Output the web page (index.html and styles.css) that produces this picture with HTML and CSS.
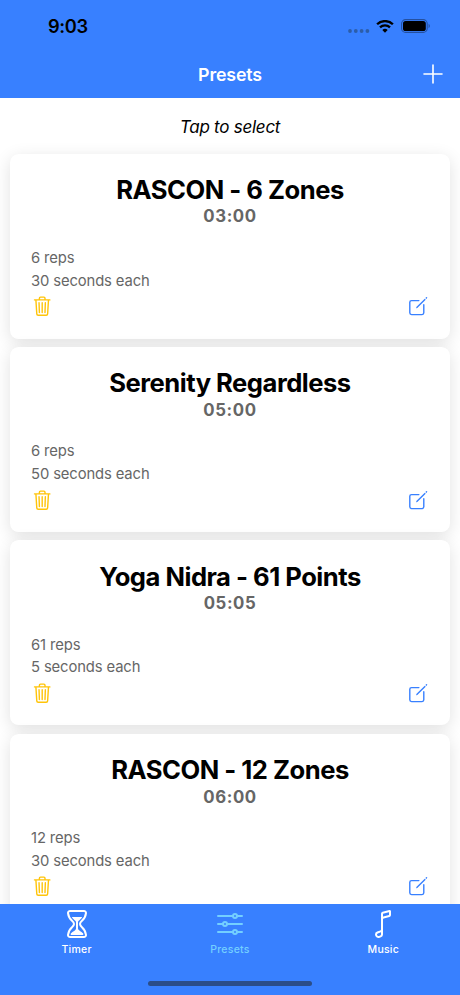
FILE: index.html
```html
<!DOCTYPE html>
<html lang="en">
<head>
<meta charset="utf-8">
<title>Presets</title>
<link rel="stylesheet" href="styles.css">
</head>
<body>
<svg class="symbols" aria-hidden="true">
  <symbol id="trash" viewBox="0 0 512 512"><path d="m112 112 20 320c.95 18.49 14.4 32 32 32h184c18 0 31-13.5 32-32l20-320M80 112h352M192 112V72a24 24 0 0 1 24-24h80a24 24 0 0 1 24 24v40M256 176v224M184 176l8 224M328 176l-8 224"/></symbol>
  <symbol id="edit" viewBox="0 0 512 512"><path d="M384 224v184a40 40 0 0 1-40 40H104a40 40 0 0 1-40-40V168a40 40 0 0 1 40-40h167.5"/><path class="solid" d="M459.94 53.25a16.06 16.06 0 0 0-23.22-.56L424.35 65a8 8 0 0 0 0 11.31l11.34 11.32a8 8 0 0 0 11.34 0l12.06-12c6.1-6.09 6.67-16.01.85-22.38zM399.34 90 218.82 270.2a9 9 0 0 0-2.31 3.93L208.16 299a3.91 3.91 0 0 0 4.86 4.86l24.85-8.35a9 9 0 0 0 3.93-2.31L422 112.66a9 9 0 0 0 0-12.66l-9.95-10a9 9 0 0 0-12.71 0z"/></symbol>
</svg>
<div class="screen">
  <header class="header">
    <div class="status">
      <span class="clock">9:03</span>
      <div class="indicators">
        <svg class="signal" viewBox="0 0 22 4"><circle cx="2" cy="2" r="1.9"/><circle cx="7.8" cy="2" r="1.9"/><circle cx="13.6" cy="2" r="1.9"/><circle cx="19.4" cy="2" r="1.9"/></svg>
        <svg class="wifi" viewBox="0 0 18 13"><path class="arc" d="M1.1 4.3a11.3 11.3 0 0 1 15.8 0M4 7.3a7.2 7.2 0 0 1 10 0"/><path d="M9 12.8 6.3 10.1a3.8 3.8 0 0 1 5.4 0z"/></svg>
        <svg class="battery" viewBox="0 0 30 14"><rect class="case" x=".6" y=".6" width="25.6" height="12.8" rx="4"/><rect x="2" y="2" width="22.8" height="10" rx="2.6"/><path class="cap" d="M27.6 4.8v4.4c1.7-.8 1.7-3.6 0-4.4z"/></svg>
      </div>
    </div>
    <div class="navbar">
      <h1>Presets</h1>
      <svg class="add" viewBox="0 0 20 20"><path d="M10 1v18M1 10h18"/></svg>
    </div>
  </header>
  <main class="content">
    <p class="hint">Tap to select</p>
    <section class="card">
      <h2>RASCON - 6 Zones</h2>
      <div class="time">03:00</div>
      <p class="details">6 reps<br>30 seconds each</p>
      <div class="actions"><svg class="trash"><use href="#trash"/></svg><svg class="edit"><use href="#edit"/></svg></div>
    </section>
    <section class="card">
      <h2>Serenity Regardless</h2>
      <div class="time">05:00</div>
      <p class="details">6 reps<br>50 seconds each</p>
      <div class="actions"><svg class="trash"><use href="#trash"/></svg><svg class="edit"><use href="#edit"/></svg></div>
    </section>
    <section class="card">
      <h2>Yoga Nidra - 61 Points</h2>
      <div class="time">05:05</div>
      <p class="details">61 reps<br>5 seconds each</p>
      <div class="actions"><svg class="trash"><use href="#trash"/></svg><svg class="edit"><use href="#edit"/></svg></div>
    </section>
    <section class="card">
      <h2>RASCON - 12 Zones</h2>
      <div class="time">06:00</div>
      <p class="details">12 reps<br>30 seconds each</p>
      <div class="actions"><svg class="trash"><use href="#trash"/></svg><svg class="edit"><use href="#edit"/></svg></div>
    </section>
  </main>
  <footer class="footer">
    <nav class="tabs">
      <div class="tab">
        <svg viewBox="0 0 512 512"><path d="M145.61 464h220.78c19.8 0 35.55-16.29 33.42-35.06C386.06 308 304 310 304 256s83.11-51 95.8-172.94c2-18.78-13.61-35.06-33.41-35.06H145.61c-19.8 0-35.37 16.28-33.41 35.06C124.89 205 208 201 208 256s-82.06 52-95.8 172.94c-2.14 18.77 13.61 35.06 33.41 35.06z"/><path class="solid" d="M343.3 432H169.13c-15.6 0-20-18-9.06-29.16C186.55 376 240 356.78 240 326V224c0-19.85-38-35-61.51-67.2-3.88-5.31-3.49-12.8 6.37-12.8h142.73c8.41 0 10.23 7.43 6.4 12.75C310.82 189 272 204.05 272 224v102c0 30.53 55.71 47 80.4 76.87 9.95 12.04 6.47 29.13-9.1 29.13z"/></svg>
        <span>Timer</span>
      </div>
      <div class="tab active">
        <svg viewBox="0 0 512 512"><path d="M368 128h80M64 128h240M368 384h80M64 384h240M208 256h240M64 256h80"/><circle cx="336" cy="128" r="32"/><circle cx="176" cy="256" r="32"/><circle cx="336" cy="384" r="32"/></svg>
        <span>Presets</span>
      </div>
      <div class="tab">
        <svg viewBox="0 0 512 512"><path d="M240 343.31V424a32.28 32.28 0 0 1-21.88 30.65l-21.47 7.23c-25.9 8.71-52.65-10.75-52.65-38.32A34.29 34.29 0 0 1 167.25 391l50.87-17.12A32.29 32.29 0 0 0 240 343.24V92a16.13 16.13 0 0 1 12.06-15.66L360.49 48.2A6 6 0 0 1 368 54v57.76a16.13 16.13 0 0 1-12.12 15.67l-91.64 23.13A32.25 32.25 0 0 0 240 181.91V221"/></svg>
        <span>Music</span>
      </div>
    </nav>
    <div class="home"></div>
  </footer>
</div>
</body>
</html>
```
FILE: styles.css
```css
* { box-sizing: border-box; margin: 0; padding: 0; }
body { font-family: Inter, "Liberation Sans", sans-serif; background: #fff; overflow: hidden; }
svg { display: block; flex: none; }
.symbols { display: none; }
.screen { width: 460px; height: 995px; display: flex; flex-direction: column; overflow: hidden; }
.header { height: 98px; flex: none; background: #3880ff; }
.status { height: 51px; padding: 1px 29px 0 48px; display: flex; align-items: center; justify-content: space-between; }
.clock { font-size: 18.3px; font-weight: 600; letter-spacing: -.4px; }
.indicators { display: flex; align-items: center; }
.signal { width: 22px; height: 4px; margin: 9px 6px 0 0; fill: #2c5da9; }
.wifi { width: 18px; height: 13px; margin-right: 7px; }
.arc { fill: none; stroke: #000; stroke-width: 2.3; }
.battery { width: 30px; height: 14px; }
.case { fill: none; stroke: #2450a0; stroke-width: 1.1; }
.cap { fill: #2450a0; }
.navbar { height: 46px; display: grid; grid-template-columns: 1fr auto 1fr; align-items: center; padding: 0 17px; }
.navbar h1 { grid-column: 2; font-size: 17.8px; font-weight: 600; color: #fff; letter-spacing: -.15px; }
.add { width: 20px; height: 20px; justify-self: end; fill: none; stroke: #fff; stroke-width: 1.6; stroke-linecap: round; }
.content { flex: 1; min-height: 0; overflow: hidden; }
.hint { height: 55.5px; line-height: 58px; text-align: center; font-size: 17px; font-style: italic; letter-spacing: -.25px; }
.card { height: 185px; margin: 0 10px 8.4px; padding: 20.6px 21px; border-radius: 8.6px; background: #fff; box-shadow: 0 4px 17px rgba(0,0,0,.12); text-align: center; }
.card h2 { font-size: 25.6px; line-height: 31px; font-weight: 700; letter-spacing: -.5px; white-space: nowrap; }
.time { height: 22px; margin-top: .4px; line-height: 22px; font-size: 16.8px; font-weight: 700; letter-spacing: .6px; color: #666; }
.details { margin-top: 19.4px; text-align: left; font-size: 14.8px; line-height: 22.7px; letter-spacing: -.12px; color: #666; }
.actions { margin: 2.9px 0 0 -.4px; display: flex; justify-content: space-between; }
.actions svg { width: 22.4px; height: 22.4px; }
.trash, .edit, .tab svg { fill: none; stroke: currentColor; stroke-width: 32; stroke-linecap: round; stroke-linejoin: round; }
.trash { color: #ffc409; }
.edit { color: #3880ff; }
.solid { fill: currentColor; stroke: none; }
.edit .solid { stroke: currentColor; stroke-width: 7; }
.footer { height: 91px; flex: none; background: #3880ff; display: flex; flex-direction: column; justify-content: space-between; align-items: center; padding: 4px 0 9px; }
.tabs { width: 100%; display: grid; grid-template-columns: repeat(3, 1fr); }
.tab { display: flex; flex-direction: column; align-items: center; gap: 3px; color: #fff; }
.tab svg { width: 32px; height: 32px; }
.tab span { font-size: 10.5px; line-height: 14px; font-weight: 500; letter-spacing: .25px; }
.active { color: #73cfff; }
.home { width: 164px; height: 5px; border-radius: 3px; background: #2b4d88; }
```
